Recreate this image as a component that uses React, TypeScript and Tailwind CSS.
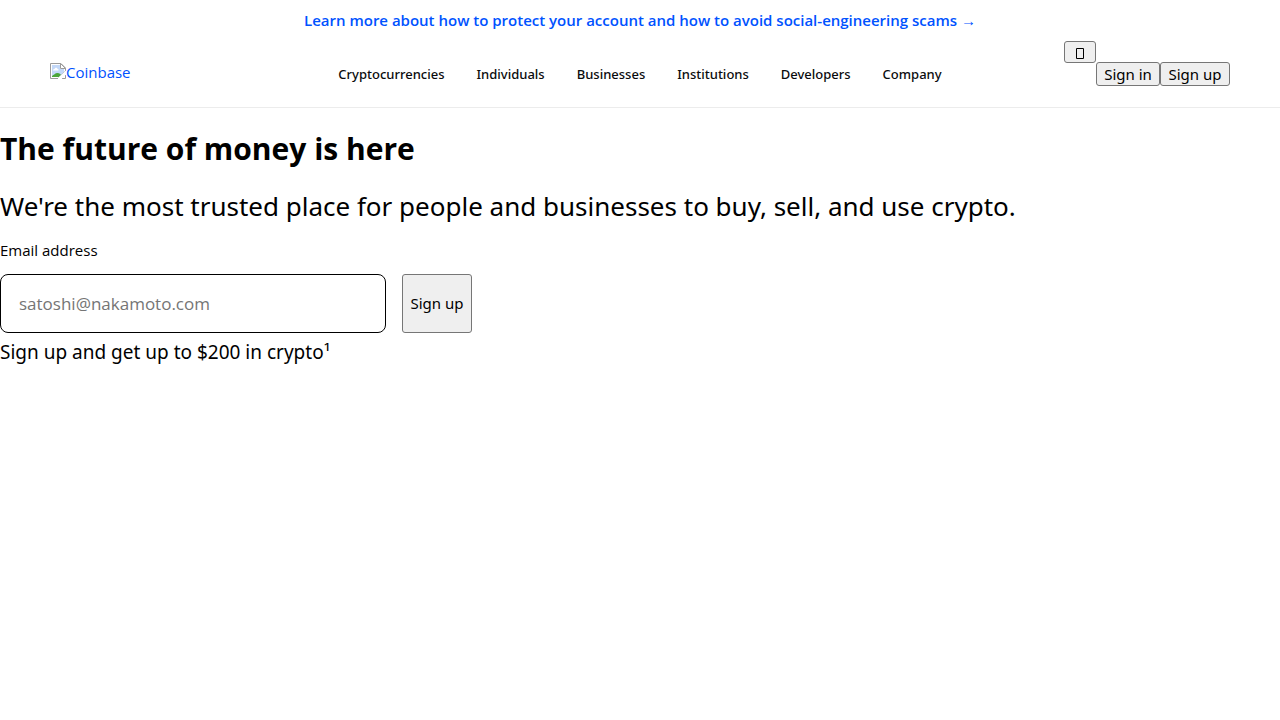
const links = ['Cryptocurrencies', 'Individuals', 'Businesses', 'Institutions', 'Developers', 'Company'];

const buttonClass =
  'cursor-pointer rounded-[3px] border border-[#767676] bg-[#efefef] text-black text-[15px]';

function BrokenImageIcon() {
  return (
    <svg width="16" height="16" viewBox="0 0 16 16" aria-hidden="true" className="mb-0.5 shrink-0">
      <path d="M1 1H11L15 5V15H1Z" fill="#fff" />
      <path d="M2 2H10V6H14V14H2Z" fill="#c3d8f8" />
      <path d="M3 7.500C3 6 4 6 4.500 6C5 4 7.500 4.500 7.500 6C9 6 9 7.500 8 7.500Z" fill="#fff" />
      <path d="M2 14V13C4 12 5 10 7.500 10C9.500 10 10.500 11 11 12L9 14Z" fill="#4ba63a" />
      <path d="M15.500 8L8.500 15V15.500H.5V.5H11L15.500 5V8M15.500 12V15.500H12" fill="none" stroke="#9b9b9b" />
      <path d="M16 7.500L8 15V16H11.500L16 11.500Z" fill="#fff" />
      <path d="M10.500 .5V5.500H15.500Z" fill="#fff" stroke="#9b9b9b" />
    </svg>
  );
}

export default function App() {
  return (
    <div className="min-h-screen bg-white font-['Noto_Sans','Open_Sans',sans-serif] text-black">
      <div className="flex h-10 items-center justify-center px-4">
        <a href="#security" className="font-['Open_Sans','Noto_Sans',sans-serif] text-[15px] leading-6 font-semibold text-[#0052ff]">
          Learn more about how to protect your account and how to avoid social-engineering scams →
        </a>
      </div>

      <header className="grid h-17 grid-cols-[1fr_auto_1fr] items-center border-b border-[#ececec] px-[50px]">
        <a href="#home" className="flex items-center pb-1 font-['Open_Sans','Noto_Sans',sans-serif] text-[15px] leading-6 text-[#0052ff]">
          <BrokenImageIcon />
          Coinbase
        </a>
        <nav className="flex gap-8">
          {links.map((label) => (
            <a key={label} href={`#${label.toLowerCase()}`} className="text-[13px] leading-5 font-medium text-[#0a0b0d]">
              {label}
            </a>
          ))}
        </nav>
        <div className="flex items-start justify-end self-start pt-px">
          <button type="button" aria-label="Change language" className={`${buttonClass} flex h-[22px] w-8 items-end justify-center pb-[3px]`}>
            <svg width="8" height="12" viewBox="0 0 8 12" aria-hidden="true">
              <path d="M.5 1.500H7.500V11.500H.5Z" fill="none" stroke="#000" />
            </svg>
          </button>
          <div className="flex pt-[21px]">
            <button type="button" className={`${buttonClass} h-6 w-16 leading-5`}>Sign in</button>
            <button type="button" className={`${buttonClass} h-6 w-[70px] leading-5`}>Sign up</button>
          </div>
        </div>
      </header>

      <main className="pt-5">
        <h1 className="font-['Open_Sans','Noto_Sans',sans-serif] text-[30px] leading-[42px] font-bold">The future of money is here</h1>
        <p className="pt-4 text-[26px] leading-10">
          We're the most trusted place for people and businesses to buy, sell, and use crypto.
        </p>
        <form onSubmit={(event) => event.preventDefault()} className="font-['Open_Sans','Noto_Sans',sans-serif]">
          <label htmlFor="email" className="block pt-3 text-[15px] leading-6">Email address</label>
          <div className="flex gap-4 pt-3">
            <input
              id="email"
              type="email"
              placeholder="satoshi@nakamoto.com"
              className="h-[59px] w-[386px] rounded-lg border border-black px-[18px] text-[17px] placeholder:text-[#757575]"
            />
            <button type="submit" className={`${buttonClass} w-[70px] font-['Noto_Sans','Open_Sans',sans-serif]`}>Sign up</button>
          </div>
        </form>
        <p className="pt-1 text-[19px] leading-[30px]">Sign up and get up to $200 in crypto¹</p>
      </main>
    </div>
  );
}
